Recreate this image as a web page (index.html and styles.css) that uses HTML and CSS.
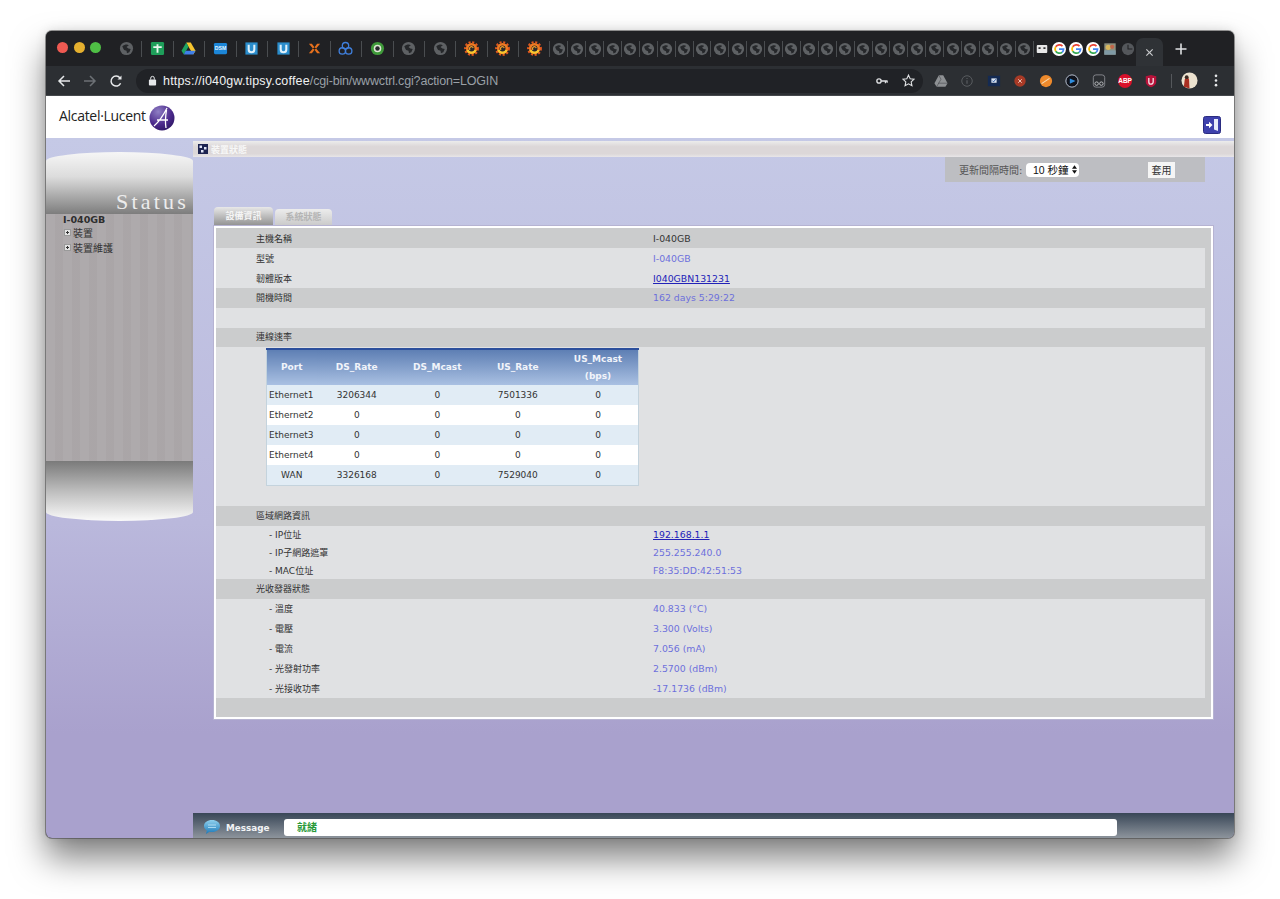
FILE: index.html
```html
<!DOCTYPE html>
<html lang="zh-Hant">
<head>
    <meta charset="UTF-8">
    <title>Status</title>
    <link rel="stylesheet" href="styles.css">
</head>
<body>
    <svg class="sprite" xmlns="http://www.w3.org/2000/svg">
        <symbol id="globe" viewBox="0 0 16 16">
            <circle cx="8" cy="8" r="7" fill="#5e6164"/>
            <path d="M3.500 5.500C6 3.500 9 3.200 10.500 4.500L8 6.500 10 8 12.500 8.500 11 12 8.500 13 8 10.500 5.500 9.500 4.500 8Z" fill="#25272a"/>
        </symbol>
        <symbol id="grafana" viewBox="0 0 16 16">
            <circle cx="8" cy="8" r="6.800" fill="none" stroke="#e2581f" stroke-width="2.200" stroke-dasharray="2.200 1.800"/>
            <circle cx="8" cy="8" r="6" fill="#ee7a22"/>
            <path d="M2.600 9.500a5.600 5.600 0 0 0 10.800 0Z" fill="#f8c62f"/>
            <circle cx="8" cy="8" r="3.200" fill="#27292c"/>
            <path d="M6.500 9.500A2 2 0 1 1 9.800 7.500" fill="none" stroke="#f4a028" stroke-width="1.300"/>
        </symbol>
        <symbol id="google" viewBox="0 0 16 16">
            <circle cx="8" cy="8" r="8" fill="#fff"/>
            <path d="M12 4.600A5.200 5.200 0 0 0 4.200 5.400" fill="none" stroke="#e94335" stroke-width="2"/>
            <path d="M4.200 5.400a5.200 5.200 0 0 0 0 5.200" fill="none" stroke="#fbbc05" stroke-width="2"/>
            <path d="M4.200 10.600a5.200 5.200 0 0 0 7.400 1.200" fill="none" stroke="#34a853" stroke-width="2"/>
            <path d="M11.600 11.800A5.200 5.200 0 0 0 13.200 8H8" fill="none" stroke="#4285f4" stroke-width="2"/>
        </symbol>
        <symbol id="ublock" viewBox="0 0 16 16">
            <rect x="1.500" y="1.500" width="13" height="13" fill="#2a8dcc"/>
            <path d="M5 4v5a3 3 0 0 0 6 0V4" fill="none" stroke="#dff1fb" stroke-width="2.200"/>
        </symbol>
        <symbol id="drive" viewBox="0 0 16 16">
            <path d="M5.600 1.500h4.800L15.500 10.500 13 14.500 8 6Z" fill="#f7c52f"/>
            <path d="M5.600 1.500 8 6 3 14.500.5 10.500Z" fill="#1ea362"/>
            <path d="M5 10.500h10.500L13 14.500H3Z" fill="#3f7fe8"/>
        </symbol>
    </svg>

    <div class="window">
        <div class="tabstrip">
            <div class="lights">
                <span class="light light-red"></span>
                <span class="light light-yellow"></span>
                <span class="light light-green"></span>
            </div>
            <div class="tab"><svg class="ico"><use href="#globe"/></svg></div>
            <div class="tab">
                <svg class="ico" viewBox="0 0 16 16"><rect x="1" y="1" width="14" height="14" rx="1.500" fill="#1e9e5a"/><path d="M7 3.500h2v9H7ZM3.500 5.500h9v2h-9Z" fill="#e9f6ee"/></svg>
            </div>
            <div class="tab"><svg class="ico"><use href="#drive"/></svg></div>
            <div class="tab">
                <svg class="ico" viewBox="0 0 16 16"><rect x="1" y="2" width="14" height="12" rx="1.500" fill="#1c86d8"/><text class="dsm-text" x="8" y="10">DSM</text></svg>
            </div>
            <div class="tab"><svg class="ico"><use href="#ublock"/></svg></div>
            <div class="tab"><svg class="ico"><use href="#ublock"/></svg></div>
            <div class="tab">
                <svg class="ico" viewBox="0 0 16 16"><path d="M2 3h3.200L8 6.600 10.800 3H14L9.700 8 14 13h-3.200L8 9.400 5.200 13H2L6.300 8Z" fill="#e5701d"/><path d="M8 6.600 9.700 8 8 9.400 6.300 8Z" fill="#151515"/></svg>
            </div>
            <div class="tab">
                <svg class="ico" viewBox="0 0 16 16"><g fill="none" stroke="#3f7fdc" stroke-width="1.400"><circle cx="8" cy="5" r="3.400"/><circle cx="4.600" cy="10.600" r="3.400"/><circle cx="11.400" cy="10.600" r="3.400"/></g></svg>
            </div>
            <div class="tab">
                <svg class="ico" viewBox="0 0 16 16"><circle cx="8" cy="8" r="7" fill="#3f9a3a"/><circle cx="8" cy="8" r="4" fill="#dfe7d6"/><circle cx="8" cy="8" r="2.400" fill="#26282b"/></svg>
            </div>
            <div class="tab"><svg class="ico"><use href="#globe"/></svg></div>
            <div class="tab"><svg class="ico"><use href="#globe"/></svg></div>
            <div class="tab"><svg class="ico"><use href="#grafana"/></svg></div>
            <div class="tab"><svg class="ico"><use href="#grafana"/></svg></div>
            <div class="tab"><svg class="ico"><use href="#grafana"/></svg></div>

            <div class="tab-mini"><svg class="ico"><use href="#globe"/></svg></div>
            <div class="tab-mini"><svg class="ico"><use href="#globe"/></svg></div>
            <div class="tab-mini"><svg class="ico"><use href="#globe"/></svg></div>
            <div class="tab-mini"><svg class="ico"><use href="#globe"/></svg></div>
            <div class="tab-mini"><svg class="ico"><use href="#globe"/></svg></div>
            <div class="tab-mini"><svg class="ico"><use href="#globe"/></svg></div>
            <div class="tab-mini"><svg class="ico"><use href="#globe"/></svg></div>
            <div class="tab-mini"><svg class="ico"><use href="#globe"/></svg></div>
            <div class="tab-mini"><svg class="ico"><use href="#globe"/></svg></div>
            <div class="tab-mini"><svg class="ico"><use href="#globe"/></svg></div>
            <div class="tab-mini"><svg class="ico"><use href="#globe"/></svg></div>
            <div class="tab-mini"><svg class="ico"><use href="#globe"/></svg></div>
            <div class="tab-mini"><svg class="ico"><use href="#globe"/></svg></div>
            <div class="tab-mini"><svg class="ico"><use href="#globe"/></svg></div>
            <div class="tab-mini"><svg class="ico"><use href="#globe"/></svg></div>
            <div class="tab-mini"><svg class="ico"><use href="#globe"/></svg></div>
            <div class="tab-mini"><svg class="ico"><use href="#globe"/></svg></div>
            <div class="tab-mini"><svg class="ico"><use href="#globe"/></svg></div>
            <div class="tab-mini"><svg class="ico"><use href="#globe"/></svg></div>
            <div class="tab-mini"><svg class="ico"><use href="#globe"/></svg></div>
            <div class="tab-mini"><svg class="ico"><use href="#globe"/></svg></div>
            <div class="tab-mini"><svg class="ico"><use href="#globe"/></svg></div>
            <div class="tab-mini"><svg class="ico"><use href="#globe"/></svg></div>
            <div class="tab-mini"><svg class="ico"><use href="#globe"/></svg></div>
            <div class="tab-mini"><svg class="ico"><use href="#globe"/></svg></div>
            <div class="tab-mini"><svg class="ico"><use href="#globe"/></svg></div>
            <div class="tab-mini"><svg class="ico"><use href="#globe"/></svg></div>

            <div class="tab-mini tab-tight">
                <svg class="ico" viewBox="0 0 16 16"><rect x="2" y="3.500" width="12" height="9" rx="1" fill="#e8e8e8"/><rect x="4" y="6" width="2.400" height="2" fill="#333"/><rect x="9.600" y="6" width="2.400" height="2" fill="#333"/></svg>
            </div>
            <div class="tab-mini tab-tight"><svg class="ico"><use href="#google"/></svg></div>
            <div class="tab-mini tab-tight"><svg class="ico"><use href="#google"/></svg></div>
            <div class="tab-mini tab-tight"><svg class="ico"><use href="#google"/></svg></div>
            <div class="tab-mini tab-tight">
                <svg class="ico" viewBox="0 0 16 16"><rect x="1.500" y="1.500" width="13" height="13" fill="#8c8f7e"/><circle cx="6" cy="6" r="3" fill="#d8b65c"/><circle cx="10.500" cy="5.500" r="2.400" fill="#c0664a"/><rect x="1.500" y="9.500" width="13" height="5" fill="#7f9aa5"/></svg>
            </div>
            <div class="tab-mini tab-tight">
                <svg class="ico" viewBox="0 0 16 16"><circle cx="8" cy="8" r="7" fill="#54575b"/><path d="M8 3v5h5" fill="none" stroke="#202124" stroke-width="1.200"/></svg>
            </div>
            <div class="tab-active">
                <svg class="close" viewBox="0 0 10 10"><path d="M1.500 1.500 8.500 8.500M8.500 1.500 1.500 8.500" stroke="#c8cacc" stroke-width="1.300"/></svg>
            </div>
            <svg class="newtab" viewBox="0 0 12 12"><path d="M6 .5v11M.5 6h11" stroke="#dfe1e3" stroke-width="1.600"/></svg>
        </div>

        <div class="toolbar">
            <svg class="nav-btn" viewBox="0 0 14 14"><path d="M13 7H2M7 2 2 7l5 5" fill="none" stroke="#e6e8ea" stroke-width="1.500"/></svg>
            <svg class="nav-btn" viewBox="0 0 14 14"><path d="M1 7h11M7 2l5 5-5 5" fill="none" stroke="#6c7075" stroke-width="1.500"/></svg>
            <svg class="nav-btn" viewBox="0 0 14 14"><path d="M11.600 9.200A5 5 0 1 1 11 4" fill="none" stroke="#e6e8ea" stroke-width="1.500"/><path d="M12.500 1.500v4h-4Z" fill="#e6e8ea"/></svg>
            <div class="omnibox">
                <svg class="lock" viewBox="0 0 10 12"><rect x="1" y="5" width="8" height="6.500" rx="1" fill="#e6e8ea"/><path d="M3 5V3.400a2 2 0 0 1 4 0V5" fill="none" stroke="#e6e8ea" stroke-width="1.100"/></svg>
                <span class="url"><b>https://i040gw.tipsy.coffee</b>/cgi-bin/wwwctrl.cgi?action=LOGIN</span>
                <svg class="omni-key" viewBox="0 0 14 8"><circle cx="3.500" cy="4" r="2.500" fill="none" stroke="#dfe1e3" stroke-width="1.600"/><path d="M6 4h7.500M11 4v2.500M13 4v2" stroke="#dfe1e3" stroke-width="1.500" fill="none"/></svg>
                <svg class="omni-star" viewBox="0 0 14 14"><path d="M7 1.200 8.800 5.100l4.200.5-3.100 2.900.8 4.200L7 10.600l-3.700 2.100.8-4.200L1 5.600l4.200-.5Z" fill="none" stroke="#dfe1e3" stroke-width="1.200"/></svg>
            </div>
            <div class="ext-row">
                <svg class="ext" viewBox="0 0 16 16"><path d="M5.500 1.500h5L15.500 10.500 13 14.500H3L.5 10.500Z" fill="#8e9194"/><path d="M5.500 1.500 8 6 3 14.500M5 10.500h10.500" fill="none" stroke="#2c2f33" stroke-width="0.500"/></svg>
                <svg class="ext" viewBox="0 0 16 16"><circle cx="8" cy="8" r="6" fill="none" stroke="#5f6266"/><path d="M8 7v4M8 4.500v1.200" stroke="#5f6266" stroke-width="1.200"/></svg>
                <svg class="ext" viewBox="0 0 16 16"><rect x="1" y="2" width="14" height="12" fill="#142a52"/><rect x="5" y="5" width="6" height="5" fill="#dde6f2"/><path d="M6 7.500 7.500 9 10 6" fill="none" stroke="#1b4d9a"/></svg>
                <svg class="ext" viewBox="0 0 16 16"><circle cx="8" cy="8" r="6.500" fill="#a83a26"/><path d="M6 6l4 4M10 6l-4 4" stroke="#eec9bd" stroke-width="1.100"/></svg>
                <svg class="ext" viewBox="0 0 16 16"><circle cx="8" cy="8" r="7" fill="#ee8a2c"/><path d="M3 11 12 5" stroke="#f7dcb4" stroke-width="1.200"/></svg>
                <svg class="ext" viewBox="0 0 16 16"><circle cx="8" cy="8" r="7" fill="#10131c" stroke="#c9d3e6"/><path d="M5.500 5 12 8l-6.500 3Z" fill="#2f8fe0"/></svg>
                <svg class="ext" viewBox="0 0 16 16"><rect x="1.500" y="1" width="13" height="14" rx="3" fill="none" stroke="#8b8e92"/><circle cx="5.300" cy="11" r="2" fill="none" stroke="#c6c8ca"/><circle cx="10.700" cy="11" r="2" fill="none" stroke="#c6c8ca"/></svg>
                <div class="ext-abp">ABP</div>
                <svg class="ext" viewBox="0 0 16 16"><path d="M2 2.500 8 1l6 1.500V9c0 3-3 5-6 6-3-1-6-3-6-6Z" fill="#b8123a"/><path d="M5.500 4.500V9a2.500 2.500 0 0 0 5 0V4.500" fill="none" stroke="#f5e3e7" stroke-width="1.500"/></svg>
                <span class="ext-sep"></span>
                <svg class="avatar" viewBox="0 0 18 18"><circle cx="9" cy="9" r="8.500" fill="#ece2cf"/><path d="M3 15.500 4 8c1-3 4-3 4.500 0L9 17.500Z" fill="#a92f22"/><circle cx="6" cy="5.500" r="2" fill="#3a2a22"/></svg>
                <svg class="menu-dots" viewBox="0 0 4 14"><circle cx="2" cy="2" r="1.400" fill="#e6e8ea"/><circle cx="2" cy="7" r="1.400" fill="#e6e8ea"/><circle cx="2" cy="12" r="1.400" fill="#e6e8ea"/></svg>
            </div>
        </div>

        <header class="brandbar">
            <span class="brand-name">Alcatel&middot;Lucent</span>
            <svg class="brand-logo" viewBox="0 0 26 26">
                <defs>
                    <radialGradient id="logoFill" cx="35%" cy="25%" r="85%">
                        <stop offset="0" stop-color="#8f7fc4"/>
                        <stop offset="0.600" stop-color="#4c2a8c"/>
                        <stop offset="1" stop-color="#2a1460"/>
                    </radialGradient>
                </defs>
                <circle cx="13" cy="13" r="12.500" fill="url(#logoFill)"/>
                <path d="M5 21C11 16 15 9 18 3M17.500 5C16.500 11 16 17 17 23M8 15h11" fill="none" stroke="#fff" stroke-width="1.300"/>
            </svg>
            <div class="logout">
                <svg viewBox="0 0 18 18"><rect x="0.500" y="0.500" width="17" height="17" rx="2" fill="#3e41ad" stroke="#2a2c80"/><path d="M11 3h4v12l-4-1.500Z" fill="#e8ecfa"/><path d="M3 8h3V5.800L9.500 9 6 12.200V10H3Z" fill="#fff"/></svg>
            </div>
        </header>

        <div class="page">
            <aside class="sidebar">
                <div class="side-top"><span class="side-title">Status</span></div>
                <div class="side-body">
                    <div class="tree-root">I-040GB</div>
                    <div class="tree-item"><span class="tree-plus"></span>裝置</div>
                    <div class="tree-item"><span class="tree-plus"></span>裝置維護</div>
                </div>
                <div class="side-bottom"></div>
            </aside>

            <main class="content">
                <div class="titlebar">
                    <svg class="title-icon" viewBox="0 0 10 10"><rect width="10" height="10" fill="#1c2350"/><rect x="1.500" y="1.500" width="2.500" height="2.500" fill="#dfe4f5"/><rect x="6" y="3" width="2.500" height="2.500" fill="#dfe4f5"/><rect x="3" y="6" width="2.500" height="2.500" fill="#dfe4f5"/></svg>
                    <span class="title-text">裝置狀態</span>
                </div>

                <div class="refresh-wrap">
                    <div class="refresh">
                        <span class="refresh-label">更新間隔時間:</span>
                        <div class="refresh-select">
                            <span>10 秒鐘</span>
                            <svg viewBox="0 0 6 10"><path d="M3 0 6 4H0ZM3 10 0 6h6Z" fill="#111"/></svg>
                        </div>
                        <button class="refresh-apply">套用</button>
                    </div>
                </div>

                <div class="tabs">
                    <div class="page-tab page-tab-on">設備資訊</div>
                    <div class="page-tab">系統狀態</div>
                </div>

                <div class="panel">
                    <div class="row"><span class="row-label">主機名稱</span><span class="row-plain">I-040GB</span></div>
                    <div class="row row-light"><span class="row-label">型號</span><span class="row-value">I-040GB</span></div>
                    <div class="row row-light"><span class="row-label">韌體版本</span><a class="row-link" href="#">I040GBN131231</a></div>
                    <div class="row row-head"><span class="row-label">開機時間</span><span class="row-value">162 days 5:29:22</span></div>
                    <div class="row row-light"></div>

                    <div class="row row-head row-rate"><span class="row-label">連線速率</span></div>
                    <div class="rate-area">
                        <table class="rate-table">
                            <thead>
                                <tr><th class="col-port">Port</th><th>DS_Rate</th><th>DS_Mcast</th><th>US_Rate</th><th>US_Mcast<br>(bps)</th></tr>
                            </thead>
                            <tbody>
                                <tr><td class="port-name">Ethernet1</td><td>3206344</td><td>0</td><td>7501336</td><td>0</td></tr>
                                <tr><td class="port-name">Ethernet2</td><td>0</td><td>0</td><td>0</td><td>0</td></tr>
                                <tr><td class="port-name">Ethernet3</td><td>0</td><td>0</td><td>0</td><td>0</td></tr>
                                <tr><td class="port-name">Ethernet4</td><td>0</td><td>0</td><td>0</td><td>0</td></tr>
                                <tr><td>WAN</td><td>3326168</td><td>0</td><td>7529040</td><td>0</td></tr>
                            </tbody>
                        </table>
                    </div>

                    <div class="row row-head"><span class="row-label">區域網路資訊</span></div>
                    <div class="row row-light row-short"><span class="row-label row-sub">- IP位址</span><a class="row-link" href="#">192.168.1.1</a></div>
                    <div class="row row-light row-short"><span class="row-label row-sub">- IP子網路遮罩</span><span class="row-value">255.255.240.0</span></div>
                    <div class="row row-light row-short"><span class="row-label row-sub">- MAC位址</span><span class="row-value">F8:35:DD:42:51:53</span></div>

                    <div class="row row-head"><span class="row-label">光收發器狀態</span></div>
                    <div class="row row-light row-sensor"><span class="row-label row-sub">- 溫度</span><span class="row-value">40.833 (°C)</span></div>
                    <div class="row row-light row-sensor"><span class="row-label row-sub">- 電壓</span><span class="row-value">3.300 (Volts)</span></div>
                    <div class="row row-light row-sensor"><span class="row-label row-sub">- 電流</span><span class="row-value">7.056 (mA)</span></div>
                    <div class="row row-light row-sensor"><span class="row-label row-sub">- 光發射功率</span><span class="row-value">2.5700 (dBm)</span></div>
                    <div class="row row-light row-sensor"><span class="row-label row-sub">- 光接收功率</span><span class="row-value">-17.1736 (dBm)</span></div>
                </div>

                <div class="statusbar">
                    <svg class="status-icon" viewBox="0 0 18 16">
                        <defs>
                            <linearGradient id="bubbleFill" x1="0" y1="0" x2="0" y2="1">
                                <stop offset="0" stop-color="#8fd0ee"/>
                                <stop offset="1" stop-color="#1a78b8"/>
                            </linearGradient>
                        </defs>
                        <path d="M9 1c4.500 0 8 2.400 8 6s-3.500 6-8 6c-1 0-1.800 0-2.600-.3L3 15l.8-3.500C2 10.400 1 8.800 1 7c0-3.600 3.500-6 8-6Z" fill="url(#bubbleFill)"/>
                        <path d="M5 6h8M5 8.500h8" stroke="#bfe6f7" stroke-width="0.800"/>
                    </svg>
                    <span class="status-label">Message</span>
                    <div class="status-field">就緒</div>
                </div>
            </main>
        </div>
    </div>
</body>
</html>
```

FILE: styles.css
```css
/* Base */
* {
    margin: 0;
    padding: 0;
    box-sizing: border-box;
}

html, body {
    height: 899px;
    overflow: hidden;
}

body {
    background-color: #fff;
    font-family: "DejaVu Sans", "Noto Sans CJK TC", sans-serif;
    font-size: 9px;
    color: #333;
    padding: 31px 46px 61px;
}

.sprite {
    display: none;
}

/* Browser window */
.window {
    height: 807px;
    display: flex;
    flex-direction: column;
    border-radius: 6px;
    overflow: hidden;
    background-color: #202124;
    box-shadow: 0 0 0 1px rgba(70, 70, 70, 0.55), 0 20px 34px rgba(0, 0, 0, 0.5), 0 0 12px rgba(0, 0, 0, 0.12);
}

.tabstrip {
    height: 35px;
    display: flex;
    align-items: center;
    background-color: #202124;
}

.lights {
    width: 65px;
    padding-left: 11px;
    display: flex;
    gap: 5.5px;
    flex: none;
    margin-top: -3px;
}

.light {
    width: 11px;
    height: 11px;
    border-radius: 50%;
}

.light-red { background-color: #ef5a52; }
.light-yellow { background-color: #e5b02f; }
.light-green { background-color: #4fbf45; }

.tab {
    width: 31.4px;
    height: 16px;
    flex: none;
    display: flex;
    align-items: center;
    justify-content: center;
    border-right: 1px solid #4a4d50;
}

.tab-mini {
    width: 17.9px;
    height: 16px;
    flex: none;
    display: flex;
    align-items: center;
    justify-content: center;
    border-right: 1px solid #4a4d50;
}

.tab-tight {
    width: 17.1px;
    border-right: none;
}

.ico {
    width: 14px;
    height: 14px;
    flex: none;
}

.tab .ico {
    width: 15px;
    height: 15px;
}

.dsm-text {
    font-family: "Liberation Sans", sans-serif;
    font-size: 5.5px;
    font-weight: bold;
    fill: #e8f4fd;
    text-anchor: middle;
}

.tab-active {
    width: 27px;
    height: 28px;
    margin-top: 7px;
    flex: none;
    display: flex;
    align-items: center;
    justify-content: center;
    background-color: #2f3236;
    border-radius: 7px 7px 0 0;
}

.close {
    width: 9px;
    height: 9px;
}

.newtab {
    width: 12px;
    height: 12px;
    margin-left: 12px;
    flex: none;
}

/* Toolbar */
.toolbar {
    height: 30px;
    display: flex;
    align-items: center;
    background-color: #2c2f33;
    padding-left: 11px;
    border-bottom: 1px solid #45484c;
}

.nav-btn {
    width: 14px;
    height: 14px;
    margin-right: 12px;
    flex: none;
}

.omnibox {
    width: 787px;
    height: 24px;
    margin-left: 1px;
    flex: none;
    display: flex;
    align-items: center;
    background-color: #202226;
    border-radius: 12px;
    padding-left: 12px;
}

.lock {
    width: 9px;
    height: 11px;
    margin-right: 6px;
    flex: none;
}

.url {
    width: 700px;
    font-family: "Liberation Sans", sans-serif;
    font-size: 12.5px;
    letter-spacing: -0.16px;
    color: #9aa0a6;
    white-space: nowrap;
}

.url b {
    font-weight: normal;
    letter-spacing: 0.18px;
    color: #f0f1f2;
}

.omni-key {
    width: 12px;
    height: 8px;
    margin-left: 13px;
    flex: none;
}

.omni-star {
    width: 13px;
    height: 13px;
    margin-left: 14px;
    flex: none;
}

.ext-row {
    display: flex;
    align-items: center;
    padding-left: 11px;
}

.ext {
    width: 14px;
    height: 14px;
    margin-right: 12.3px;
    flex: none;
}

.ext-abp {
    width: 14px;
    height: 14px;
    margin-right: 12.3px;
    flex: none;
    border-radius: 50%;
    background-color: #d8102a;
    color: #fff;
    font-family: "Liberation Sans", sans-serif;
    font-size: 6.5px;
    font-weight: bold;
    line-height: 14px;
    text-align: center;
}

.ext-sep {
    width: 1px;
    height: 14px;
    background-color: #55585c;
}

.avatar {
    width: 17px;
    height: 17px;
    margin-left: 9px;
    flex: none;
}

.menu-dots {
    width: 4px;
    height: 13px;
    margin-left: 16px;
    flex: none;
}

/* Brand header */
.brandbar {
    height: 42px;
    flex: none;
    display: flex;
    align-items: flex-start;
    background-color: #fff;
    padding: 9px 13px 0;
}

.brand-name {
    font-family: "Open Sans", sans-serif;
    font-size: 14px;
    line-height: 22px;
    letter-spacing: -0.3px;
    color: #222;
    width: 90px;
}

.brand-logo {
    width: 26px;
    height: 26px;
    flex: none;
}

.logout {
    margin-left: auto;
    margin-top: 11px;
    width: 18px;
    height: 18px;
}

.logout svg {
    display: block;
}

/* Page body */
.page {
    flex: 1;
    display: flex;
    background: linear-gradient(to bottom, #c5c9e6 0%, #bab8dc 55%, #a9a1cd 85%, #a9a1cd 100%);
    min-height: 0;
}

.sidebar {
    width: 147px;
    flex: none;
    padding-top: 14px;
}

.side-top {
    height: 62px;
    position: relative;
    background: linear-gradient(to bottom, #f6f6f6 0%, #dcdcdc 40%, #7d7d7d 100%);
    border-radius: 50% 50% 0 0 / 9px 9px 0 0;
}

.side-title {
    position: absolute;
    right: 4px;
    bottom: -1px;
    font-family: "Liberation Serif", serif;
    font-size: 22px;
    letter-spacing: 3.2px;
    line-height: 26px;
    color: #ececec;
}

.side-body {
    height: 247px;
    background-color: #aca8aa;
    background-image: repeating-linear-gradient(to right, rgba(255, 255, 255, 0.025) 0, rgba(255, 255, 255, 0.025) 9px, rgba(110, 90, 90, 0.03) 9px, rgba(110, 90, 90, 0.03) 17px);
}

.tree-root {
    padding-left: 17px;
    font-weight: bold;
    font-size: 9.5px;
    line-height: 11px;
    color: #2e2e2e;
}

.tree-item {
    display: flex;
    align-items: center;
    height: 15px;
    padding-left: 18px;
    font-size: 10px;
    color: #333;
}

.tree-plus {
    position: relative;
    width: 7px;
    height: 7px;
    margin-right: 2px;
    background-color: #e4e4e4;
    border: 1px solid #9a9a9a;
}

.tree-plus::before {
    content: "";
    position: absolute;
    left: 2px;
    top: 1px;
    width: 1px;
    height: 3px;
    background-color: #333;
}

.tree-plus::after {
    content: "";
    position: absolute;
    left: 1px;
    top: 2px;
    width: 3px;
    height: 1px;
    background-color: #333;
}

.side-bottom {
    height: 60px;
    background: linear-gradient(to bottom, #7a7a7a 0%, #bdbdbd 50%, #fafafa 100%);
    border-radius: 0 0 50% 50% / 0 0 9px 9px;
}

/* Content column */
.content {
    flex: 1;
    min-width: 0;
    display: flex;
    flex-direction: column;
    padding-top: 3px;
}

.titlebar {
    height: 16px;
    flex: none;
    display: flex;
    align-items: center;
    padding-left: 5px;
    background: linear-gradient(to bottom, #ececec 0%, #dcd7d8 35%, #dcd7d8 80%, #e8e6e8 100%);
}

.title-icon {
    width: 10px;
    height: 10px;
    margin-right: 3px;
    flex: none;
}

.title-text {
    font-size: 9px;
    font-weight: bold;
    color: #f7f7f7;
}

.refresh-wrap {
    display: flex;
    justify-content: flex-end;
    padding-right: 29px;
    flex: none;
}

.refresh {
    width: 260px;
    height: 25px;
    display: flex;
    align-items: center;
    padding-left: 14px;
    background-color: #bdbec2;
}

.refresh-label {
    width: 67px;
    font-size: 10px;
    color: #555;
    white-space: nowrap;
}

.refresh-select {
    width: 53px;
    height: 14px;
    display: flex;
    align-items: center;
    justify-content: space-between;
    padding: 0 2px 0 7px;
    background-color: #fff;
    border-radius: 4px;
    font-family: "Liberation Sans", "Noto Sans CJK TC", sans-serif;
    font-size: 10.5px;
    color: #111;
}

.refresh-select svg {
    width: 5px;
    height: 9px;
    flex: none;
}

.refresh-apply {
    width: 27px;
    height: 16px;
    margin-left: 69px;
    border: none;
    background-color: #f5f5f5;
    font-family: "DejaVu Sans", "Noto Sans CJK TC", sans-serif;
    font-size: 10px;
    color: #333;
}

/* Tabs above the panel */
.tabs {
    display: flex;
    align-items: flex-end;
    gap: 2px;
    height: 19px;
    margin-top: 25px;
    margin-left: 21px;
    flex: none;
}

.page-tab {
    width: 57px;
    height: 17px;
    display: flex;
    align-items: center;
    justify-content: center;
    padding-bottom: 2px;
    background: linear-gradient(to bottom, #ececec, #c9c9c9);
    border-radius: 4px 4px 0 0;
    font-size: 9px;
    font-weight: bold;
    color: #b4b4b4;
}

.page-tab-on {
    width: 59px;
    height: 19px;
    background: linear-gradient(to bottom, #e8e8e8, #8f8f8f);
    color: #f5f5f5;
}

/* Info panel */
.panel {
    width: 999px;
    height: 493px;
    margin-left: 21px;
    flex: none;
    background-color: #cbcccd;
    border: 2px solid #fff;
    box-shadow: 0 0 0 1px #b6b3d2;
}

.row {
    height: 20px;
    display: flex;
    align-items: center;
    padding-left: 40px;
}

.row-light {
    margin-right: 6px;
    background-color: #e0e1e3;
}

.row-head {
    padding-bottom: 2px;
}

.row-rate {
    height: 19px;
}

.row-short {
    height: 17.7px;
}

.row-sensor {
    height: 19.8px;
}

.row-label {
    width: 397px;
    flex: none;
    color: #333;
}

.row-sub {
    padding-left: 13px;
}

.row-plain,
.row-value,
.row-link {
    font-size: 9.35px;
}

.row-plain {
    color: #333;
}

.row-value {
    color: #6d70dc;
}

.row-link {
    color: #2222b8;
    text-decoration: underline;
}

/* Rate table */
.rate-area {
    height: 159px;
    margin-right: 6px;
    padding: 1px 0 0 50px;
    background-color: #e0e1e3;
}

.rate-table {
    width: 373px;
    table-layout: fixed;
    border-collapse: collapse;
    border: 1px solid #c4d3dd;
    border-top: none;
    background-color: #fff;
    color: #333;
}

.rate-table th {
    height: 36px;
    background: linear-gradient(to bottom, #5e7fb4, #a9c0e2);
    border-top: 2px solid #2c4f9c;
    color: #f1f4fa;
    font-size: 9px;
    font-weight: bold;
    line-height: 17px;
    text-align: center;
}

.rate-table .col-port {
    width: 50px;
}

.rate-table td {
    height: 20px;
    text-align: center;
}

.rate-table td.port-name {
    text-align: left;
    padding-left: 2px;
}

.rate-table tbody tr:nth-child(odd) {
    background-color: #e1ecf5;
}

/* Status bar */
.statusbar {
    height: 25px;
    margin-top: auto;
    flex: none;
    display: flex;
    align-items: center;
    padding-left: 10px;
    background: linear-gradient(to bottom, #384657, #8d949c);
}

.status-icon {
    width: 18px;
    height: 16px;
    margin-top: 2px;
    flex: none;
}

.status-label {
    width: 63px;
    margin-top: 4px;
    padding-left: 5px;
    font-size: 8.8px;
    font-weight: bold;
    color: #f2f3f5;
}

.status-field {
    width: 833px;
    height: 17px;
    margin-top: 3px;
    padding-left: 13px;
    background-color: #fff;
    border-radius: 3px;
    font-size: 10px;
    font-weight: bold;
    line-height: 17px;
    color: #2a9a3a;
}
```
